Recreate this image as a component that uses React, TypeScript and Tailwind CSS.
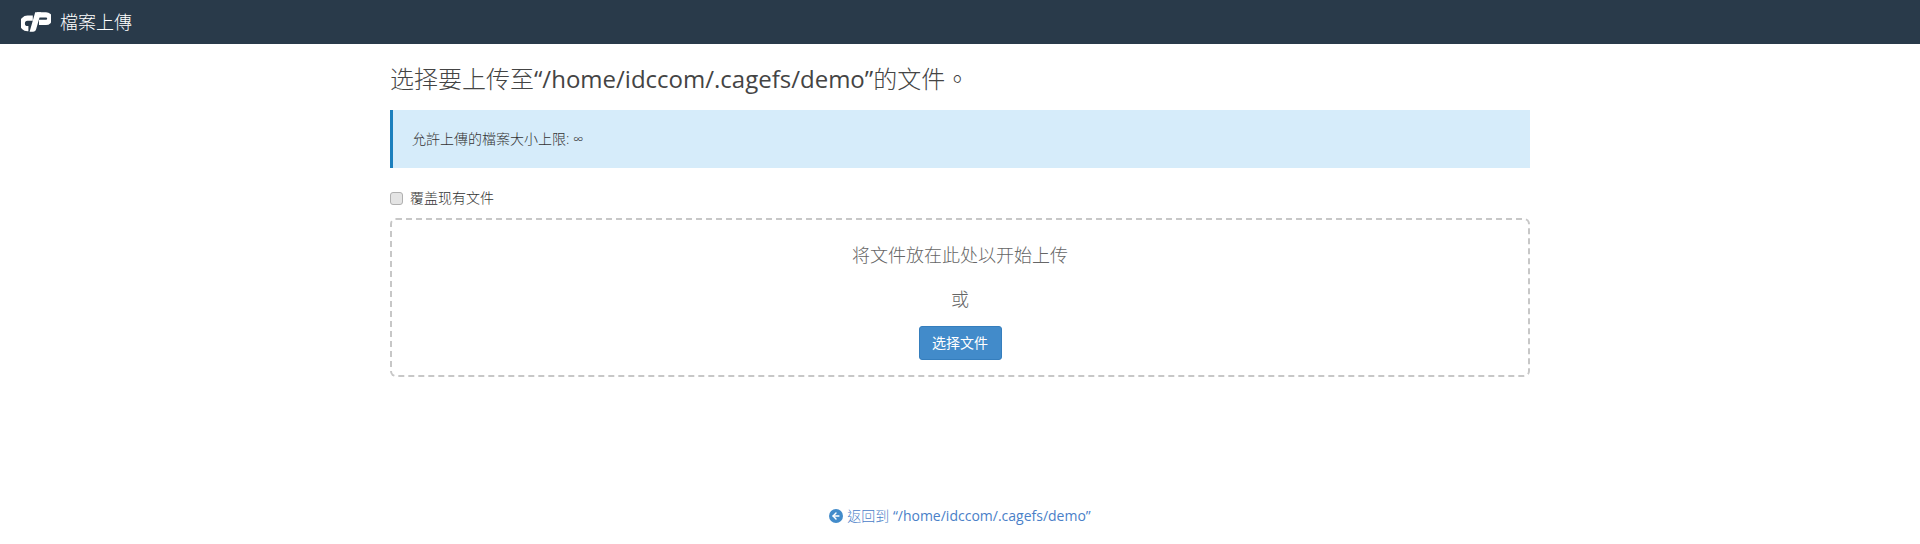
import { ArrowLeft } from 'lucide-react';

const fontStack = '[font-family:"Open_Sans","Noto_Sans_CJK_TC",sans-serif]';

function CpLogo() {
  return (
    <svg viewBox="0 0 30 20" className="w-[30px] h-5 mr-[9px]" aria-hidden="true">
      {/* c */}
      <path d="M11.800 6.200H6.500a5.200 5.200 0 0 0 0 10.400h.9" fill="none" stroke="#fff" strokeWidth="5.200" />
      {/* P 볼 */}
      <path d="M16 2.800h9a3.800 3.800 0 0 1 0 7.600H18" fill="none" stroke="#fff" strokeWidth="5.200" />
      {/* P 기둥 */}
      <path d="M14.200.2h5.800L15.200 17c-.5 1.800-1.500 2.800-3.200 2.800H8.600L14.200.2z" fill="#fff" />
    </svg>
  );
}

export default function App() {
  return (
    <div className={`${fontStack} h-[544px] bg-white text-[#333] overflow-hidden`}>
      {/* 상단 헤더 */}
      <header className="flex items-center h-11 pl-[21px] bg-[#293a4a]">
        <CpLogo />
        <span className="text-lg text-white font-light">檔案上傳</span>
      </header>

      <main className="w-[1140px] mx-auto">
        <h1 className="mt-[19px] mb-4 text-2xl leading-[31px] text-[#444]">
          <span className="font-light">选择要上传至</span>“/home/idccom/.cagefs/demo”
          <span className="font-light">的文件。</span>
        </h1>

        <div className="flex items-center h-[58px] pl-[19px] border-l-[3px] border-[#1b7fbd] bg-[#d6ecfa] text-sm font-light">
          允許上傳的檔案大小上限: ∞
        </div>

        <label className="flex items-center mt-[21px] h-[18px] text-sm font-light">
          <input
            type="checkbox"
            className="appearance-none w-[13px] h-[13px] mr-[7px] bg-[#e4e4e4] border border-[#b0b0b0] rounded-[3px]"
          />
          覆盖现有文件
        </label>

        <div className="flex flex-col items-center mt-[11px] h-[159px] border-2 border-dashed border-[#c7c7c7] rounded-md">
          <p className="mt-[23px] text-lg leading-6 font-light text-[#666]">将文件放在此处以开始上传</p>
          <p className="mt-5 text-lg leading-6 font-light text-[#666]">或</p>
          <button className="mt-[15px] w-[83px] h-[34px] bg-[#428bca] border border-[#357ebd] rounded-[3px] text-sm text-white">
            选择文件
          </button>
        </div>

        <div className="flex justify-center items-center mt-[129px] text-sm text-[#4a80c8]">
          <span className="flex items-center justify-center w-3.5 h-3.5 mr-1 rounded-full bg-[#428bca]">
            <ArrowLeft className="w-2.5 h-2.5 text-white" strokeWidth={3.500} />
          </span>
          <span className="font-light">返回到</span>&nbsp;“/home/idccom/.cagefs/demo”
        </div>
      </main>
    </div>
  );
}
